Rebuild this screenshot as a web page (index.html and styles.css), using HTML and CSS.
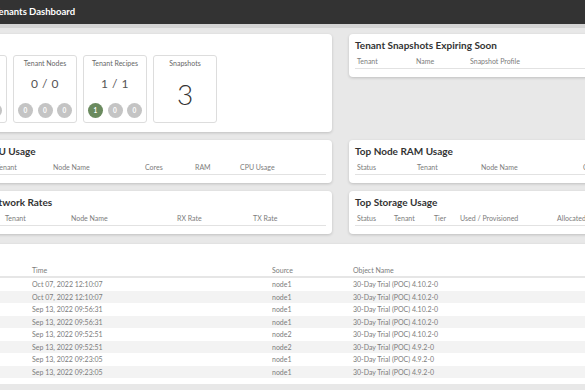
FILE: index.html
```html
<!DOCTYPE html>
<html>
<head>
  <title>Tenants Dashboard</title>
  <link rel="stylesheet" href="styles.css">
</head>
<body>
  <div class="page">
    <div class="topbar">Tenants Dashboard</div>

    <div class="content">
      <div class="grid">
        <!-- summary counters -->
        <div class="card summary">
          <div class="stats">
            <div class="stat">
              <div class="stat-title">Tenants</div>
              <div class="stat-value">2 / 2</div>
              <div class="dots">
                <span class="dot">0</span><span class="dot">0</span><span class="dot">0</span>
              </div>
            </div>
            <div class="stat">
              <div class="stat-title">Tenant Nodes</div>
              <div class="stat-value">0 / 0</div>
              <div class="dots">
                <span class="dot">0</span><span class="dot">0</span><span class="dot">0</span>
              </div>
            </div>
            <div class="stat">
              <div class="stat-title">Tenant Recipes</div>
              <div class="stat-value">1 / 1</div>
              <div class="dots">
                <span class="dot ok">1</span><span class="dot">0</span><span class="dot">0</span>
              </div>
            </div>
            <div class="stat">
              <div class="stat-title">Snapshots</div>
              <div class="stat-big">3</div>
            </div>
          </div>
        </div>

        <div class="card small">
          <h3>Tenant Snapshots Expiring Soon</h3>
          <table>
            <colgroup><col style="width:59px"><col style="width:54px"><col></colgroup>
            <tr><th>Tenant</th><th>Name</th><th>Snapshot Profile</th></tr>
          </table>
        </div>

        <div class="card small">
          <h3>Top CPU Usage</h3>
          <table>
            <colgroup><col style="width:27px"><col style="width:57px"><col style="width:92px"><col style="width:50px"><col style="width:45px"><col></colgroup>
            <tr><th></th><th>Tenant</th><th>Node Name</th><th>Cores</th><th>RAM</th><th>CPU Usage</th></tr>
          </table>
        </div>

        <div class="card small">
          <h3>Top Node RAM Usage</h3>
          <table>
            <colgroup><col style="width:60px"><col style="width:64px"><col style="width:102px"><col></colgroup>
            <tr><th>Status</th><th>Tenant</th><th>Node Name</th><th>Capacity</th></tr>
          </table>
        </div>

        <div class="card small">
          <h3>Top Network Rates</h3>
          <table>
            <colgroup><col style="width:36px"><col style="width:66px"><col style="width:106px"><col style="width:76px"><col></colgroup>
            <tr><th>Status</th><th>Tenant</th><th>Node Name</th><th>RX Rate</th><th>TX Rate</th></tr>
          </table>
        </div>

        <div class="card small">
          <h3>Top Storage Usage</h3>
          <table>
            <colgroup><col style="width:37px"><col style="width:40px"><col style="width:26px"><col style="width:97px"><col></colgroup>
            <tr><th>Status</th><th>Tenant</th><th>Tier</th><th>Used / Provisioned</th><th>Allocated</th></tr>
          </table>
        </div>
      </div>

      <!-- recent events -->
      <div class="card events">
        <table>
          <colgroup><col style="width:63px"><col style="width:240px"><col style="width:81px"><col></colgroup>
          <tr><th></th><th>Time</th><th>Source</th><th>Object Name</th></tr>
          <tr><td></td><td>Oct 07, 2022 12:10:07</td><td>node1</td><td>30-Day Trial (POC) 4.10.2-0</td></tr>
          <tr><td></td><td>Oct 07, 2022 12:10:07</td><td>node1</td><td>30-Day Trial (POC) 4.10.2-0</td></tr>
          <tr><td></td><td>Sep 13, 2022 09:56:31</td><td>node1</td><td>30-Day Trial (POC) 4.10.2-0</td></tr>
          <tr><td></td><td>Sep 13, 2022 09:56:31</td><td>node1</td><td>30-Day Trial (POC) 4.10.2-0</td></tr>
          <tr><td></td><td>Sep 13, 2022 09:52:51</td><td>node2</td><td>30-Day Trial (POC) 4.10.2-0</td></tr>
          <tr><td></td><td>Sep 13, 2022 09:52:51</td><td>node2</td><td>30-Day Trial (POC) 4.9.2-0</td></tr>
          <tr><td></td><td>Sep 13, 2022 09:23:05</td><td>node1</td><td>30-Day Trial (POC) 4.9.2-0</td></tr>
          <tr><td></td><td>Sep 13, 2022 09:23:05</td><td>node1</td><td>30-Day Trial (POC) 4.9.2-0</td></tr>
        </table>
      </div>
    </div>
  </div>
</body>
</html>
```

FILE: styles.css
```css
body {
  margin: 0;
  overflow: hidden;
  background-color: #e8e8e8;
  font-family: Lato, "Open Sans", sans-serif;
  color: #333;
}

.page {
  width: 740px;
  margin-left: -39px;
}

.topbar {
  height: 24px;
  line-height: 24px;
  padding-left: 33px;
  background-color: #333;
  border-bottom: 4px solid #d4d4d4;
  color: #fff;
  font-size: 9.5px;
  font-weight: bold;
}

.content {
  padding-top: 6px;
}

.grid {
  display: grid;
  grid-template-columns: 371px 352px;
  column-gap: 17px;
  row-gap: 8px;
  align-items: start;
}

.card {
  background-color: #fff;
  border-radius: 4px;
  box-shadow: 0 1px 3px rgba(0, 0, 0, 0.18);
  box-sizing: border-box;
}

.summary {
  height: 98px;
  padding: 21px 6px 0;
  overflow: hidden;
}

.stats {
  display: flex;
  gap: 6px;
  margin-left: -24px;
}

.stat {
  width: 64px;
  height: 68px;
  box-sizing: border-box;
  border: 1px solid #ddd;
  border-radius: 3px;
  padding-top: 3px;
  text-align: center;
}

.stat-title {
  font-size: 7px;
  line-height: 8px;
  color: #666;
}

.stat-value {
  margin-top: 11px;
  font-size: 12px;
  line-height: 12px;
  color: #555;
  letter-spacing: 0.5px;
}

.stat-big {
  margin-top: 13px;
  font-size: 28px;
  line-height: 28px;
  font-weight: 300;
  color: #333;
}

.dots {
  display: flex;
  justify-content: center;
  gap: 4.5px;
  margin-top: 13px;
}

.dot {
  width: 15px;
  height: 15px;
  line-height: 15px;
  border-radius: 50%;
  background-color: #c4c4c4;
  color: #fff;
  font-size: 6.5px;
  font-weight: bold;
}

.dot.ok {
  background-color: #6a8a5e;
}

.small {
  padding: 6px 6px 8px;
}

h3 {
  margin: 0;
  font-size: 10px;
  line-height: 10px;
  font-weight: bold;
  color: #333;
}

table {
  width: 100%;
  border-collapse: collapse;
  table-layout: fixed;
}

.small table {
  margin-top: 4px;
}

th {
  padding: 3px 2px;
  font-size: 7px;
  line-height: 8px;
  font-weight: normal;
  color: #7c7c7c;
  text-align: left;
  white-space: nowrap;
  border-bottom: 1px solid #e2e2e2;
}

.events {
  margin-top: 10px;
  padding: 19px 6px 6px;
}

.events th {
  padding: 3px 2px 2px;
  border-bottom: 2px solid #e6e6e6;
}

.events td {
  height: 12.5px;
  padding: 0 2px;
  font-size: 7px;
  color: #7c7c7c;
  white-space: nowrap;
}

.events tr:nth-child(odd) td {
  background-color: #f3f3f3;
}
```
